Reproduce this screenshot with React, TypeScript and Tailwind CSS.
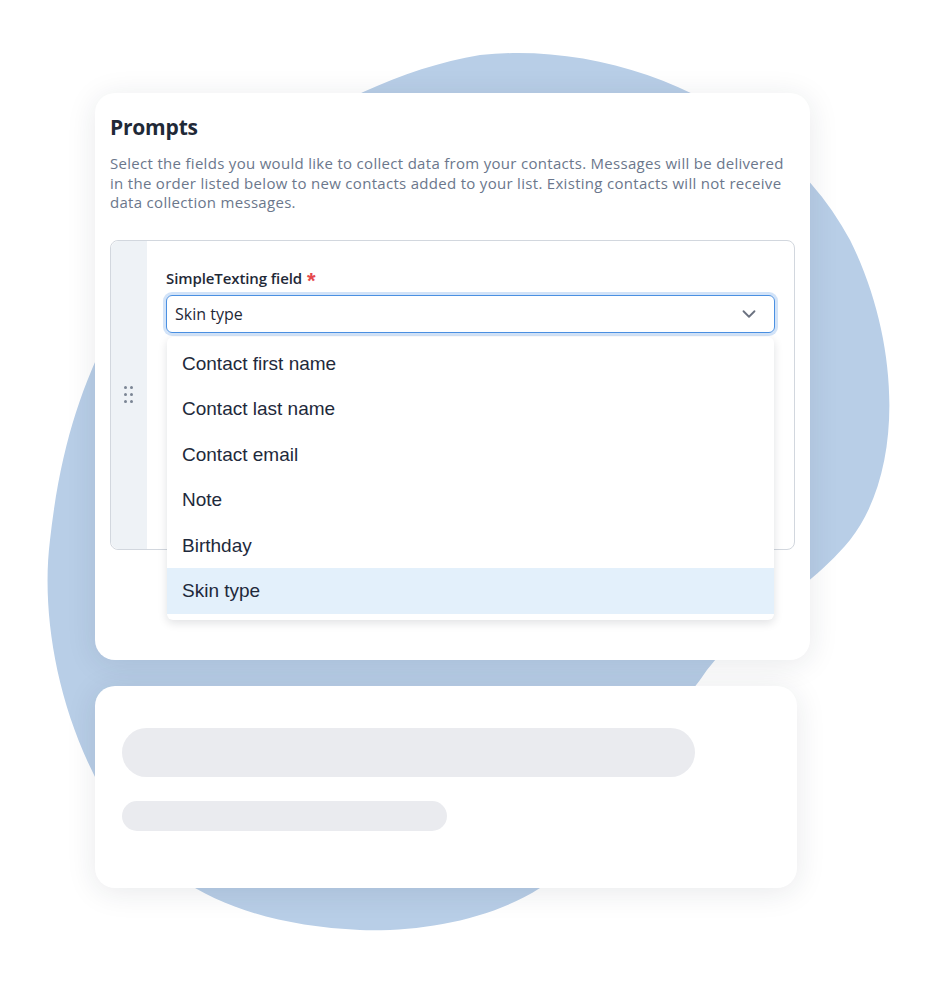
import { ChevronDown } from "lucide-react";

const options = ["Contact first name", "Contact last name", "Contact email", "Note", "Birthday", "Skin type"];

function Blob() {
  return (
    <svg className="absolute inset-0" width="936" height="999" viewBox="0 0 936 999">
      <path
        d="M480 55 C620 40 780 110 850 240 C900 340 905 470 850 540 C800 600 740 620 700 680 L540 888 C490 920 420 932 360 930 C250 925 170 890 120 820 C60 730 40 620 50 540 C60 450 80 390 110 330 C170 200 330 80 480 55 Z"
        fill="#b8cee7"
      />
    </svg>
  );
}

function DragHandle() {
  return (
    <div className="grid grid-cols-2 gap-x-[3px] gap-y-[4px] -ml-[2px]">
      {[0, 1, 2, 3, 4, 5].map((i) => (
        <span key={i} className="w-[3px] h-[3px] rounded-full bg-[#7b8594]" />
      ))}
    </div>
  );
}

export default function App() {
  return (
    <div className="relative w-[936px] h-[999px] bg-white overflow-hidden font-['Open_Sans',sans-serif]">
      <Blob />

      <div className="relative pt-[93px] pl-[95px] flex flex-col gap-[26px]">
        {/* Prompts card */}
        <div className="w-[715px] h-[567px] bg-white rounded-[20px] shadow-[0_4px_30px_rgba(30,41,59,0.10)] px-[15px] pt-[20px]">
          <h1 className="text-[21px] font-bold text-[#1f2937] leading-[28px] tracking-[-0.2px]">Prompts</h1>
          <p className="mt-[13px] text-[15px] leading-[19.5px] text-[#6b778c] tracking-[0.3px]">
            Select the fields you would like to collect data from your contacts. Messages will be delivered
            in the order listed below to new contacts added to your list. Existing contacts will not receive
            data collection messages.
          </p>

          <div className="mt-[27px] h-[310px] border border-[#d2d7de] rounded-[8px] flex">
            <div className="w-[36px] bg-[#eef2f6] rounded-l-[8px] flex items-center justify-center">
              <DragHandle />
            </div>
            <div className="flex-1 pl-[19px] pr-[19px] pt-[26px]">
              <label className="flex items-center gap-[5px] text-[15px] font-semibold text-[#1f2937] leading-[18px] tracking-[-0.1px]">
                SimpleTexting field
                <span className="text-[#e5484d] text-[22px] leading-[18px] font-bold font-['Liberation_Sans',sans-serif] pt-[5px]">*</span>
              </label>
              <div className="relative mt-[5px]">
                <div className="h-[38px] border border-[#4a90e2] ring-[3px] ring-[#4a90e2]/25 rounded-[6px] flex items-center justify-between pl-[8px] pr-[14px]">
                  <span className="text-[16px] text-[#1f2937]">Skin type</span>
                  <ChevronDown className="w-[22px] h-[22px] text-[#6b7280]" strokeWidth={2} />
                </div>
                <ul className="absolute left-[1px] right-[1px] top-[42px] bg-white rounded-[6px] shadow-[0_3px_10px_rgba(15,23,42,0.13)] pt-[5px] pb-[6px] font-['Liberation_Sans',Arial,sans-serif]">
                  {options.map((o) => (
                    <li
                      key={o}
                      className={`h-[45.4px] flex items-center px-[15px] text-[19px] text-[#1e293b] ${o === "Skin type" ? "bg-[#e3f0fb]" : ""}`}
                    >
                      {o}
                    </li>
                  ))}
                </ul>
              </div>
            </div>
          </div>
        </div>

        {/* Placeholder card */}
        <div className="w-[702px] h-[202px] bg-white rounded-[20px] shadow-[0_4px_30px_rgba(30,41,59,0.10)] pt-[42px] pl-[27px] flex flex-col gap-[24px]">
          <div className="w-[573px] h-[49px] rounded-full bg-[#eaebef]" />
          <div className="w-[325px] h-[30px] rounded-full bg-[#eaebef]" />
        </div>
      </div>
    </div>
  );
}
